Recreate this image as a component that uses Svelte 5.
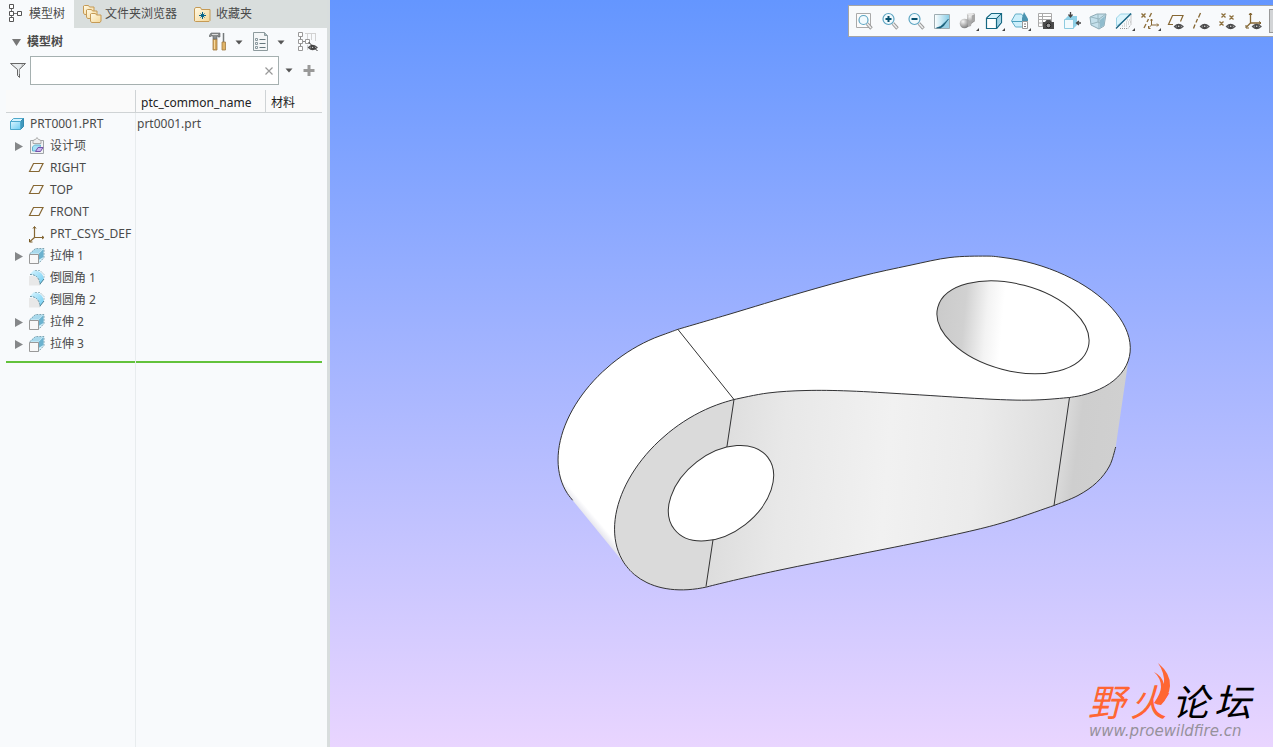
<script>
  const tabs = [
    { label: '模型树', icon: 'tree', active: true },
    { label: '文件夹浏览器', icon: 'folders', active: false },
    { label: '收藏夹', icon: 'favorites', active: false }
  ];

  const rows = [
    { name: 'PRT0001.PRT', icon: 'part', level: 0, common: 'prt0001.prt' },
    { name: '设计项', icon: 'design', level: 1, expandable: true },
    { name: 'RIGHT', icon: 'plane', level: 1 },
    { name: 'TOP', icon: 'plane', level: 1 },
    { name: 'FRONT', icon: 'plane', level: 1 },
    { name: 'PRT_CSYS_DEF', icon: 'csys', level: 1 },
    { name: '拉伸 1', icon: 'extrude', level: 1, expandable: true },
    { name: '倒圆角 1', icon: 'round', level: 1 },
    { name: '倒圆角 2', icon: 'round', level: 1 },
    { name: '拉伸 2', icon: 'extrude', level: 1, expandable: true },
    { name: '拉伸 3', icon: 'extrude', level: 1, expandable: true }
  ];

  const tools = [
    { icon: 'refit', label: '重新调整' },
    { icon: 'zoomin', label: '放大' },
    { icon: 'zoomout', label: '缩小' },
    { icon: 'repaint', label: '重画' },
    { icon: 'render', label: '渲染选项', menu: true },
    { icon: 'style', label: '显示样式', menu: true },
    { icon: 'saved', label: '已保存方向', menu: true },
    { icon: 'views', label: '视图管理器' },
    { icon: 'drag', label: '视图法向' },
    { icon: 'perspective', label: '透视图' },
    { icon: 'section', label: '截面', menu: true },
    { icon: 'datum', label: '基准显示过滤器', menu: true },
    { icon: 'planes', label: '平面显示' },
    { icon: 'axes', label: '轴显示' },
    { icon: 'points', label: '点显示' },
    { icon: 'csyses', label: '坐标系显示' }
  ];

  let query = $state('');

  // Catmull-Rom spline through the points, as cubic segments
  function curve(p) {
    let d = '';
    for (let i = 0; i < p.length - 1; i++) {
      const a = p[i - 1] ?? p[i];
      const b = p[i];
      const c = p[i + 1];
      const e = p[i + 2] ?? c;
      d += `C${b[0] + (c[0] - a[0]) / 6} ${b[1] + (c[1] - a[1]) / 6} ${c[0] - (e[0] - b[0]) / 6} ${c[1] - (e[1] - b[1]) / 6} ${c[0]} ${c[1]}`;
    }
    return d;
  }

  // Points along a rotated ellipse, angles in degrees
  function arc(cx, cy, rx, ry, turn, from, to, n = 20) {
    const r = (turn * Math.PI) / 180;
    return Array.from({ length: n + 1 }, (_, i) => {
      const t = ((from + ((to - from) * i) / n) * Math.PI) / 180;
      const x = rx * Math.cos(t);
      const y = ry * Math.sin(t);
      return [cx + x * Math.cos(r) - y * Math.sin(r), cy + x * Math.sin(r) + y * Math.cos(r)];
    });
  }
  const start = (p) => `M${p[0][0]} ${p[0][1]}`;
  const backwards = (p) => [...p].reverse();

  const back = [[678, 329.3], ...arc(664.5, 424, 119.5, 80, -37.7, -62, -183)];
  const frontUpper = [[734, 399.5], ...arc(721, 493.2, 119.5, 80, -37.7, -62, -183)];
  const frontLower = arc(721, 493.2, 119.5, 80, -37.7, -183, -235, 10);
  const top = [[678, 329.3], [730, 314], [800, 293], [860, 276.5], [910, 265.3], [950, 257.5], ...arc(1013.5, 327.6, 119.5, 67, 14.8, -112, 46), [1069.5, 397.5]];
  const rim = arc(1013.5, 327.6, 119.5, 67, 14.8, 2, 46, 10);
  const mid = [[1069.5, 397.5], [1035, 400], [993, 399.3], [910, 394.3], [850, 391], [806, 390.5], [768, 393], [734, 399.5]];
  const bottom = [[706, 586.5], [780, 570], [850, 556], [920, 542], [975, 530], [1010, 520.5], [1054, 505.5]];
  const end = [[1054, 505.5], [1078, 495.5], [1096.7, 482.5], [1109.5, 466], [1115.7, 447]];
</script>

{#snippet caret()}
  <svg width="8" height="5" viewBox="0 0 8 5" aria-hidden="true"><path d="M.5.500h7L4 4.500z" fill="#555" /></svg>
{/snippet}

{#snippet eye(x, y)}
  <g transform="translate({x} {y})">
    <path d="M.5 3.500Q4.500-.5 9 3.500Q4.500 7.500.5 3.500z" fill="#eee" stroke="#555" stroke-width="1.200" />
    <circle cx="4.700" cy="3.500" r="2.300" fill="#444" /><circle cx="4.700" cy="3.300" r=".8" fill="#ddd" />
  </g>
{/snippet}

{#snippet lens(x, y, r)}
  <path d="M{x + r * 0.8} {y + r * 0.8}L17.500 17.500" stroke="#9a9a9a" stroke-width="3.400" />
  <path d="M{x + r * 0.8} {y + r * 0.8}L17 17" stroke="#eee" stroke-width="1.500" />
  <circle cx={x} cy={y} r={r} fill="#f1fafe" stroke="#5da5c2" stroke-width="1.200" />
{/snippet}

{#snippet icon(name)}
  <svg class="icon" width="20" height="20" viewBox="0 0 20 20" fill="none" aria-hidden="true">
    {#if name === 'tree'}
      <path d="M5.500 5v9M5.500 9.500h6" stroke="#777" />
      <path d="M3.500 .5h4v4h-4zM3.500 7.500h4v4h-4zM3.500 13.500h4v4h-4zM11.500 7.500h4v4h-4z" fill="#fff" stroke="#555" />
    {:else if name === 'folders'}
      {#each [[1, 1], [4, 5], [8, 9]] as [x, y]}
        <path d="M{x + 0.5} {y + 8}v-7l1-.5h4l1 1.500h4.500v6l-1 1.500h-8.500z" fill="url(#folder)" stroke="#c59a55" />
      {/each}
    {:else if name === 'favorites'}
      <path d="M1.500 17v-12l1-1.500h5l1 2h8.500v11l-1 1h-13.500z" fill="url(#folder)" stroke="#c59a55" />
      <path d="M9.500 8v7M6 11.500h7M7.500 9.500l4 4M11.500 9.500l-4 4" stroke="#07658b" />
    {:else if name === 'part'}
      <path d="M3.500 7.500l3-3h10l-3 3z" fill="#d5f3ff" stroke="#4fa8ca" />
      <path d="M13.500 7.500l3-3v8l-3 3z" fill="#4098bd" stroke="#338bb0" />
      <path d="M3.500 7.500h10v8h-10z" fill="url(#blue)" stroke="#4da9cd" />
    {:else if name === 'design'}
      <path d="M3.500 4.500h13v13h-13z" fill="#f1f3f4" stroke="#a0a5a7" />
      <path d="M6 5.500q0-2 2.500-2l1.500-2 1.500 2q2.500 0 2.500 2v2h-8z" fill="#eee" stroke="#aaa" />
      <path d="M5.500 11l2-2h6l-1 5-2 1h-5z" fill="#a6e0f5" stroke="#63b4cf" />
      <path d="M8.500 15.500l2.500-4h5l-2.500 4z" fill="#c9b7ee" stroke="#7452aa" />
    {:else if name === 'plane'}
      <path d="M2.500 13.500l4-8h9.500l-4 8z" stroke="#866733" stroke-width="1.200" />
    {:else if name === 'csys'}
      <path d="M7.500 3v10.500h9M7.500 13.500l-4.500 4" stroke="#866733" stroke-width="1.200" />
      <path d="M6 4.500l1.500-2 1.500 2M15 12l2 1.500-2 1.500M2.500 15v3h3" stroke="#775823" />
    {:else if name === 'extrude'}
      <path d="M2.500 8l6-5.500h8.500v9l-5.500 6z" fill="#d6f3fd" />
      <path d="M11.500 8l5-5v8l-5 3z" fill="#6bb2cf" />
      <path d="M7.500 3h8.500l-4.500 4.500h-8.500z" fill="#a9d9ec" />
      <path d="M2.500 8l6-5.500h8.500v9l-5.500 6" stroke="#7fa4b3" stroke-dasharray="2 1" />
      <path d="M2.500 8.500h9v9h-9z" fill="#f8f8f8" stroke="#999" />
    {:else if name === 'round'}
      <path d="M2 8h4q8 1 7 9.500h-11z" fill="#e8e8e8" />
      <path d="M3 6l4-4q9 1 10 9l-4 5q0-8-10-10z" fill="url(#blue)" />
      <path d="M3 6.500q9 0 10 10" stroke="#6d98a8" stroke-dasharray="2 1" />
      <path d="M8 2.500h5l4 4v4" stroke="#9bbac4" stroke-dasharray="2 1" />
      <path d="M17 11l-4 5" stroke="#4b7f91" />
    {:else if name === 'hammer'}
      <path d="M4 7h4v11h-4z" fill="#d6a75b" stroke="#a17c45" stroke-width=".8" /><path d="M5.500 8v9" stroke="#f6d99f" />
      <path d="M0 4l2-3h9v4h-2v-1h-1v3h-4v-3h-2l-1 1z" fill="#8b8e8e" stroke="#5e6364" stroke-width=".6" />
      <path d="M3 2.500h6" stroke="#ddd" /><path d="M14.500 1v9" stroke="#75797b" stroke-width="1.500" />
      <path d="M13 10h3.500v8h-3.500z" fill="#e0b468" stroke="#a17c45" stroke-width=".8" />
    {:else if name === 'list'}
      <path d="M2.500 .5h11l3 3v15h-14z" fill="#f4f6f7" stroke="#8d9a9d" /><path d="M13.500 .5v3h3" fill="#a6b9bd" stroke="#8d9a9d" />
      <path d="M8.500 7.500h6M8.500 11.500h6M8.500 15.500h6" stroke="#66777d" />
      <path d="M4.500 6.500h2v2h-2zM4.500 10.500h2v2h-2zM4.500 14.500h2v2h-2z" stroke="#8a999e" />
    {:else if name === 'hide'}
      <path d="M2.500 5v10M2.500 9.500h6" stroke="#888" />
      <path d="M.5 .5h4v4h-4zM.5 7.500h4v4h-4zM.5 14.500h4v4h-4zM7.500 7.500h4v4h-4z" fill="#fff" stroke="#999" />
      <path d="M7 1.500h11M9.500 2v5M13.500 2v6M17.500 2v7M9.500 13v5" stroke="#d2d2d2" />
      {@render eye(10, 12)}
      <path d="M10.500 10l9 9" stroke="#333" />
    {:else if name === 'funnel'}
      <path d="M2.500 2.500h15l-6 6v8l-2-2v-6z" fill="#e8ebed" stroke="#666" />
      <path d="M13.500 4h2l-4 4v5" stroke="#999" />
    {:else if name === 'refit'}
      <path d="M2.500 2.500h14v14h-14z" fill="#fcfcfc" stroke="#aaa" />
      {@render lens(9.5, 9, 4.5)}
    {:else if name === 'zoomin'}
      {@render lens(8.5, 8, 5.5)}
      <path d="M8.500 5v6M5.500 8h6" stroke="#07516e" stroke-width="2" />
    {:else if name === 'zoomout'}
      {@render lens(8.5, 8, 5.5)}
      <path d="M5.500 8h6" stroke="#07516e" stroke-width="2" />
    {:else if name === 'repaint'}
      <path d="M2.500 3.500h15v14h-15z" fill="url(#wash)" stroke="#9fadb2" />
      <path d="M3 17q6-1 8-5l4-3h2v8z" fill="#9ad0e4" /><path d="M16.500 8l-5 5-3 2.500-4 1.500 4 0 3-2z" fill="#155b75" stroke="#155b75" stroke-width=".5" />
    {:else if name === 'render'}
      <path d="M9 3l6-1 2 1v7l-4 3-4-3z" fill="url(#metal)" />
      <path d="M9 3l5 1v7l3-1v-7z" fill="#a7a7a7" /><path d="M8 3l6-1 3 1-4 2z" fill="#e8e8e8" />
      <circle cx="6.500" cy="12.500" r="4.800" fill="url(#metal)" /><path d="M10 10l4 0-1 5-3 1z" fill="#aaa" />
    {:else if name === 'style'}
      <path d="M2.500 7l5-4.500h10v9l-5 6M12.500 7.500l5-5" stroke="#176983" stroke-width="1.200" />
      <path d="M4 7l4-4h8l-4 4z" fill="#d5f3fb" /><path d="M13 8l4-4v7l-4 5z" fill="#a4d4e5" />
      <path d="M2.500 7.500h10v10h-10z" fill="#fff" stroke="#176983" stroke-width="1.200" />
    {:else if name === 'saved'}
      <path d="M1.500 10l4-7h6l3 4v9h-9z" fill="#cceffb" stroke="#62adc6" />
      <path d="M2 10.500h12" stroke="#4ba0bc" /><path d="M14 1l4 7v2h-6v-3z" fill="#4b94b0" />
      <path d="M12.500 10.500h5v7h-5z" fill="#fff" stroke="#999" /><path d="M14 13h2M14 15.500h2" stroke="#777" />
    {:else if name === 'views'}
      <path d="M2.500 2.500h13v13h-13zM2.500 5.500h13M2.500 8.500h13M2.500 12h13M6.500 3v12" fill="#fff" stroke="#aaa" />
      <path d="M7 11h2l1.500-2h4l1 2h2.500v7h-11z" fill="#4a4a4a" /><circle cx="12.500" cy="14.500" r="2.300" fill="#999" stroke="#222" />
    {:else if name === 'drag'}
      <path d="M3 8l3-3h9v9l-3 3z" fill="#8ed1e8" /><path d="M2.500 8.500h9v9h-9z" fill="#f1fafd" stroke="#8dcbe0" />
      <path d="M8.500 1v4M6.500 3.500l2 2.500 2-2.500M19 12h-4M17 10l-2.500 2 2.500 2" stroke="#444" stroke-width="1.300" />
    {:else if name === 'perspective'}
      <path d="M2 6l7-3h9l-2 12-5 3-8-4z" fill="#c4e0eb" stroke="#8eabb6" />
      <path d="M3 6l8 2 7-5M11 8v10M3 13l7-2 6 3M10 3v8" stroke="#97b5bf" /><path d="M12 9l5-4-1 9-4 3z" fill="#90bccd" />
    {:else if name === 'section'}
      <path d="M2.500 15l0-8 4-4h11l-4 4z" fill="#dcf5fd" stroke="#9bd3e6" />
      <path d="M6 17.500h8l3-4v-10" stroke="#999" stroke-dasharray="1 1" /><path d="M8 15h6M10 13h6M12 11h5M13 9h4" stroke="#bbb" stroke-dasharray="1 1" />
      <path d="M2 17.500l15-15" stroke="#155f7c" stroke-width="1.300" />
    {:else if name === 'datum'}
      <path d="M1.500 2.500l4 4M5.500 2.500l-4 4M11.500 2l-2 4M8.500 8l-1.500 3M6 13l-2 4" stroke="#8e713e" stroke-width="1.400" />
      <path d="M11.500 8v6h7M11.500 14l-3 3M10.500 9.500l1-1.500 1 1.500M17 12.500l1.500 1.500-1.500 1.500M8.500 15v2.500h2" stroke="#866733" />
    {:else if name === 'planes'}
      <path d="M7 13.500h-4.500l4-9h10.500l-2.500 6" stroke="#866733" stroke-width="1.200" />{@render eye(8, 12)}
    {:else if name === 'axes'}
      <path d="M8.500 2l-2 4.500M5.500 8l-1.500 3.500M3 13.500l-1.500 4" stroke="#866733" stroke-width="1.300" />{@render eye(8, 12)}
    {:else if name === 'points'}
      <path d="M3.500 2.500l4 4M7.500 2.500l-4 4M11.500 4.500l4 4M15.500 4.500l-4 4M1.500 10.500l4 4M5.500 10.500l-4 4" stroke="#8e713e" stroke-width="1.300" />{@render eye(8, 12)}
    {:else if name === 'csyses'}
      <path d="M6.500 2v10h10M6.500 12l-4 4" stroke="#866733" stroke-width="1.300" /><path d="M5 4l1.500-2 1.500 2M15 10.500l2 1.500-2 1.500M2 14v3h3" stroke="#775823" />{@render eye(8, 12)}
    {/if}
  </svg>
{/snippet}

<svg class="defs" width="0" height="0" aria-hidden="true">
  <defs>
    <linearGradient id="folder" x1="0" y1="0" x2="1" y2="1"><stop offset="0" stop-color="#fffae6" /><stop offset="1" stop-color="#f5d797" /></linearGradient>
    <linearGradient id="blue" x1="0" y1="0" x2="1" y2="1"><stop offset="0" stop-color="#dcf6ff" /><stop offset="1" stop-color="#6cccf2" /></linearGradient>
    <linearGradient id="wash" x1="0" y1="0" x2="1" y2="0"><stop offset="0" stop-color="#fff" /><stop offset="1" stop-color="#86cce6" /></linearGradient>
    <radialGradient id="metal" cx=".35" cy=".3" r=".7"><stop offset="0" stop-color="#f5f5f5" /><stop offset="1" stop-color="#808080" /></radialGradient>
  </defs>
</svg>

<div class="app">
  <aside>
    <nav class="tabs">
      {#each tabs as tab}
        <button class="tab" class:active={tab.active}>{@render icon(tab.icon)}<span>{tab.label}</span></button>
      {/each}
    </nav>

    <header class="head">
      <button class="title">
        <svg width="9" height="7" viewBox="0 0 9 7" aria-hidden="true"><path d="M0 0h9L4.500 7z" fill="#777" /></svg>
        模型树
      </button>
      <button class="tool" aria-label="设置">{@render icon('hammer')}{@render caret()}</button>
      <button class="tool" aria-label="显示">{@render icon('list')}{@render caret()}</button>
      <button class="tool last" aria-label="隐藏列">{@render icon('hide')}</button>
    </header>

    <div class="filter">
      {@render icon('funnel')}
      <div class="search">
        <input type="text" aria-label="过滤" bind:value={query} />
        <button aria-label="清除" onclick={() => (query = '')}>
          <svg width="8" height="8" viewBox="0 0 8 8"><path d="M.5.5l7 7M7.500.5l-7 7" stroke="#999" stroke-width="1.200" /></svg>
        </button>
      </div>
      <button class="drop" aria-label="过滤选项">{@render caret()}</button>
      <button class="add" aria-label="添加">
        <svg width="12" height="12" viewBox="0 0 12 12"><path d="M6 0v11M.5 5.500h11" stroke="#999" stroke-width="3" /></svg>
      </button>
    </div>

    <div class="tree">
      <table>
        <colgroup><col class="c1" /><col class="c2" /><col /></colgroup>
        <thead>
          <tr><th aria-label="名称"></th><th>ptc_common_name</th><th>材料</th></tr>
        </thead>
        <tbody>
          {#each rows as row}
            <tr>
              <td>
                <div class="node" class:child={row.level === 1}>
                  {#if row.level === 1}
                    <span class="twist">
                      {#if row.expandable}
                        <svg width="8" height="9" viewBox="0 0 8 9" aria-hidden="true"><path d="M0 0l8 4.500L0 9z" fill="#858789" /></svg>
                      {/if}
                    </span>
                  {/if}
                  {@render icon(row.icon)}
                  <span>{row.name}</span>
                </div>
              </td>
              <td>{row.common ?? ''}</td>
              <td></td>
            </tr>
          {/each}
        </tbody>
      </table>
      <div class="insert"></div>
    </div>
  </aside>

  <main>
    <svg class="model" viewBox="330 0 943 747" role="img" aria-label="PRT0001">
      <defs>
        <linearGradient id="side" gradientUnits="userSpaceOnUse" x1="710" y1="480" x2="1060" y2="510">
          <stop offset="0" stop-color="#dcdcdc" /><stop offset=".2" stop-color="#e8e8e8" /><stop offset=".5" stop-color="#f1f1f1" /><stop offset=".75" stop-color="#ebebeb" /><stop offset="1" stop-color="#dcdcdc" />
        </linearGradient>
        <linearGradient id="tip" gradientUnits="userSpaceOnUse" x1="1060" y1="440" x2="1120" y2="448">
          <stop offset="0" stop-color="#dcdcdc" /><stop offset=".3" stop-color="#cecece" /><stop offset="1" stop-color="#d0d0d0" />
        </linearGradient>
        <linearGradient id="bore" gradientUnits="userSpaceOnUse" x1="938" y1="320" x2="1002" y2="326" gradientTransform="rotate(-14.800 1013 327.300)">
          <stop offset="0" stop-color="#cbcbcb" /><stop offset=".4" stop-color="#d1d1d1" /><stop offset=".75" stop-color="#f3f3f3" /><stop offset="1" stop-color="#fff" />
        </linearGradient>
        <linearGradient id="under" gradientUnits="userSpaceOnUse" x1="594" y1="530" x2="601" y2="524">
          <stop offset="0" stop-color="#dedee8" /><stop offset="1" stop-color="#fff" />
        </linearGradient>
      </defs>
      <path d="{start(back)}{curve(back)}L{frontUpper[21][0]} {frontUpper[21][1]}{curve(backwards(frontUpper))}Z" fill="url(#under)" />
      <path d="{start(top)}{curve(top)}{curve(mid)}Z" fill="#fff" />
      <path d="M679 331L733 398.500" stroke="#fff" stroke-width="3" />
      <path d="{start(frontUpper)}{curve(frontUpper)}{curve(frontLower)}Z" fill="#dadada" />
      <path d="{start(bottom)}{curve(bottom)}L1069.500 397.500{curve(mid)}Z" fill="url(#side)" />
      <path d="{start(end)}{curve(end)}L{rim[0][0]} {rim[0][1]}{curve(rim)}L1069.500 397.500Z" fill="url(#tip)" />
      <g class="edges">
        <path d={start(back) + curve(back)} />
        <path d={start(top) + curve(top) + curve(mid)} />
        <path d={start(frontUpper) + curve(frontUpper) + curve(frontLower) + curve(bottom) + curve(end)} />
        <path d="M678 329.500L734 399.500L706 586.500M1069.500 397.500L1054 505.500" />
        <ellipse cx="1013" cy="327.300" rx="77.800" ry="43.400" transform="rotate(14.800 1013 327.300)" fill="url(#bore)" />
        <ellipse cx="721" cy="493.200" rx="59" ry="39.600" transform="rotate(-37.700 721 493.200)" fill="#fff" />
      </g>
    </svg>

    <div class="toolbar" role="toolbar" aria-label="图形工具">
      {#each tools as tool}
        <button aria-label={tool.label}>
          {@render icon(tool.icon)}
          {#if tool.menu}<i></i>{/if}
        </button>
      {/each}
      <span class="more"></span>
    </div>

    <div class="brand">
      <div class="name">
        <span class="wild">野</span><span class="wild">火</span><span>论</span><span>坛</span>
        <svg class="flame" width="20" height="44" viewBox="0 0 20 44" aria-hidden="true">
          <path d="M6 0Q19 11 18 23Q17 34 9 42Q5 42 2 40Q9 30 9 24Q9 15 2 9Q10 13 12 21Q13 10 6 0z" fill="#ff6633" />
        </svg>
      </div>
      <div class="site">www.proewildfire.cn</div>
    </div>
  </main>
</div>

<style>
  :global(body) { margin: 0; }
  .defs { position: absolute; }
  .app {
    display: flex;
    height: 100vh;
    overflow: hidden;
    font-family: "Noto Sans", "Noto Sans CJK SC", sans-serif;
    font-size: 12px;
    line-height: 18px;
    color: #4a4a4a;
  }
  button { padding: 0; border: 0; background: none; font: inherit; color: inherit; }
  svg { display: block; flex: none; }
  aside {
    display: flex;
    flex-direction: column;
    flex: none;
    box-sizing: border-box;
    width: 330px;
    border-right: 3px solid #d8dddd;
    background: #f8fafc;
  }
  .tabs { display: flex; height: 28px; background: #d9dedd; }
  .tab { display: flex; align-items: center; gap: 3px; padding: 0 8px; white-space: nowrap; }
  .tab.active { padding: 0 9px 0 6px; background: #f8fafc; }
  .head { display: flex; align-items: center; gap: 8px; height: 28px; padding: 0 9px 0 12px; }
  .title { display: flex; align-items: center; gap: 6px; margin-right: auto; font-weight: 600; }
  .tool { display: flex; align-items: center; gap: 6px; }
  .tool.last { margin-left: 5px; }
  .filter { display: flex; align-items: center; height: 29px; padding: 0 12px 0 8px; }
  .search {
    display: flex;
    flex: 1;
    align-items: center;
    box-sizing: border-box;
    height: 29px;
    margin-left: 2px;
    padding-right: 5px;
    border: 1px solid #a5b0b0;
    background: #fff;
  }
  .search input { flex: 1; min-width: 0; border: 0; outline: 0; background: none; font: inherit; }
  .drop { padding: 0 6px; }
  .add { padding-left: 4px; }
  .tree {
    flex: 1;
    margin: 5px 5px 0 6px;
    background: linear-gradient(#e8ecee, #e8ecee) 129px 0 / 1px 100% no-repeat;
  }
  table { width: 100%; table-layout: fixed; border-collapse: separate; border-spacing: 0; }
  .c1 { width: 130px; }
  .c2 { width: 130px; }
  th {
    box-sizing: border-box;
    height: 23px;
    padding: 4px 0 0 5px;
    border-right: 1px solid #cfd3d5;
    border-bottom: 1px solid #cfd3d5;
    background: #fafafa;
    font-weight: 400;
    text-align: left;
    color: #222;
  }
  th:last-child { border-right: 0; }
  td { height: 22px; padding: 0 0 0 1px; white-space: nowrap; }
  td:first-child { padding: 0; }
  .node { display: flex; align-items: center; gap: 3px; padding-left: 1px; }
  .node.child { padding-left: 8px; }
  .twist { width: 10px; }
  .twist svg { margin: 1px; }
  .insert { height: 2px; margin-top: 6px; background: linear-gradient(90deg, #63c23c 129px, #e3e8ea 129px 130px, #63c23c 130px); }
  main { position: relative; flex: 1; min-width: 0; background: linear-gradient(#6496ff, #e9d5ff); }
  .model { width: 100%; height: 100%; }
  .edges { fill: none; stroke: #333; stroke-width: 1; }
  .toolbar {
    position: absolute;
    top: 5px;
    right: 0;
    display: flex;
    align-items: center;
    box-sizing: border-box;
    height: 32px;
    padding-left: 2px;
    border: 1px solid #a5a5a5;
    border-right: 0;
    background: #f8fafc;
  }
  .toolbar button { position: relative; display: grid; place-items: center; width: 26px; height: 26px; }
  .toolbar i {
    position: absolute;
    right: 2px;
    bottom: 3px;
    border-bottom: 3px solid #444;
    border-left: 3px solid transparent;
  }
  .more { width: 3px; height: 22px; margin-left: 2px; border: 1px solid #999; border-right: 0; background: #d2d4d6; }
  .brand { position: absolute; right: 22px; bottom: 8px; }
  .name {
    position: relative;
    display: flex;
    gap: 5px;
    font: italic 400 37px/46px "Noto Sans CJK SC", sans-serif;
    white-space: nowrap;
    color: #000;
  }
  .wild { color: #ff6633; }
  .flame { position: absolute; left: 64px; top: -14px; }
  .site { padding-left: 1px; font: oblique 15px/16px "DejaVu Sans", "Liberation Sans", sans-serif; color: #96919b; }
</style>
